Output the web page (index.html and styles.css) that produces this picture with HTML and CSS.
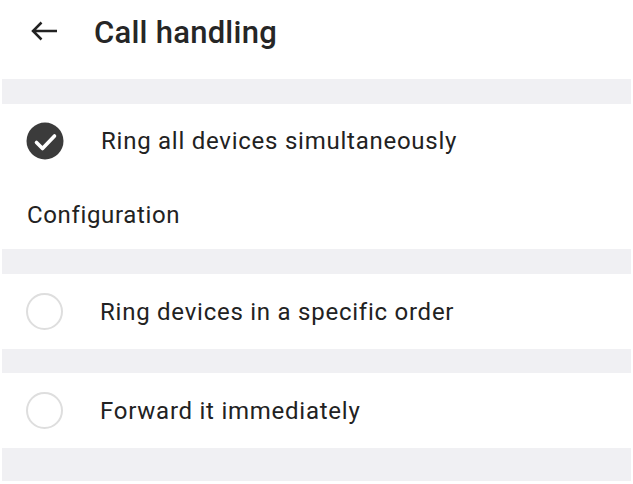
FILE: index.html
```html
<!DOCTYPE html>
<html lang="en">
<head>
<meta charset="utf-8">
<title>Call handling</title>
<link rel="stylesheet" href="styles.css">
</head>
<body>
<div class="page">
  <header class="appbar">
    <svg class="back" width="28" height="20" viewBox="0 0 28 20" aria-hidden="true">
      <path d="M2 10H26M10.5 1.5L2 10L10.5 18.5" fill="none" stroke="#222" stroke-width="2.5" stroke-linecap="butt" stroke-linejoin="miter"/>
    </svg>
    <h1 class="title">Call handling</h1>
  </header>
  <div class="band"></div>
  <section class="group">
    <div class="option">
      <svg class="radio" width="38" height="38" viewBox="0 0 38 38" aria-hidden="true">
        <circle cx="19" cy="19" r="18.5" fill="#3b3b3b"/>
        <path d="M10.5 20.5L16.5 26.5L28.5 14" fill="none" stroke="#fff" stroke-width="3.6" stroke-linecap="round" stroke-linejoin="round"/>
      </svg>
      <span class="label">Ring all devices simultaneously</span>
    </div>
    <div class="config">Configuration</div>
  </section>
  <div class="band"></div>
  <div class="option">
    <span class="radio empty"></span>
    <span class="label">Ring devices in a specific order</span>
  </div>
  <div class="band thin"></div>
  <div class="option">
    <span class="radio empty"></span>
    <span class="label">Forward it immediately</span>
  </div>
  <div class="band last"></div>
</div>
</body>
</html>
```

FILE: styles.css
```css
html, body {
  margin: 0;
  padding: 0;
  background: #ffffff;
}

body {
  font-family: Roboto, "Liberation Sans", sans-serif;
  color: #222222;
}

.page {
  width: 633px;
  height: 484px;
  overflow: hidden;
  display: flex;
  flex-direction: column;
}

.appbar {
  height: 79px;
  box-sizing: border-box;
  padding: 0 0 15px 31px;
  display: flex;
  align-items: center;
}

.back {
  display: block;
  margin-top: -3px;
}

.title {
  margin: 0 0 0 35px;
  font-size: 31px;
  font-weight: 500;
  letter-spacing: 0.25px;
  color: #262626;
}

.band {
  height: 25px;
  margin: 0 2px;
  background: #f0f0f3;
}

.band.thin {
  height: 24px;
}

.band.last {
  height: 33px;
}

.group {
  display: flex;
  flex-direction: column;
}

.option {
  height: 75px;
  padding-left: 26px;
  display: flex;
  align-items: center;
}

.group .option {
  height: 73px;
}

.radio {
  display: block;
  width: 38px;
  height: 38px;
  flex: none;
}

.radio.empty {
  width: 37px;
  height: 37px;
  box-sizing: border-box;
  border: 2.5px solid #dedede;
  border-radius: 50%;
}

.label {
  margin-left: 37px;
  font-size: 24px;
  letter-spacing: 0.75px;
  color: #222222;
}

.config {
  height: 72px;
  box-sizing: border-box;
  padding: 4px 0 0 27px;
  display: flex;
  align-items: center;
  font-size: 24px;
  letter-spacing: 0.65px;
  color: #222222;
}
```
